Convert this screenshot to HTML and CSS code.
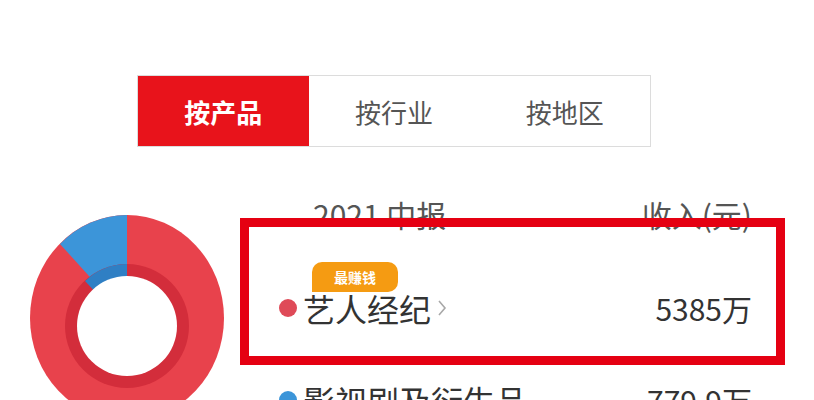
FILE: index.html
```html
<!DOCTYPE html>
<html>
<head>
  <meta charset="utf-8">
  <title>收入构成</title>
  <link rel="stylesheet" href="styles.css">
</head>
<body>
  <div class="tabs">
    <div class="tab active">按产品</div>
    <div class="tab">按行业</div>
    <div class="tab">按地区</div>
  </div>
  <div class="report">
    <svg class="donut" width="200" height="214" viewBox="0 0 200 214">
      <ellipse cx="97" cy="105" rx="97" ry="103" fill="#e8424c"/>
      <path d="M97,105 L97,2 A97,103 0 0 0 30,31 Z" fill="#3c95d9"/>
      <circle cx="97" cy="113" r="62" fill="#d32d3b"/>
      <path d="M97,113 L97,51 A62,62 0 0 0 55,68 Z" fill="#2f7fc4"/>
      <circle cx="97" cy="113" r="50" fill="#fff"/>
    </svg>
    <div class="table">
      <div class="head">
        <span>2021 中报</span>
        <span>收入(元)</span>
      </div>
      <div class="row first">
        <span class="badge">最赚钱</span>
        <div class="line">
          <i class="dot red"></i>
          <span class="name">艺人经纪</span>
          <svg class="chev" width="10" height="18" viewBox="0 0 10 18"><polyline points="2,2 8,9 2,16" fill="none" stroke="#a8a8a8" stroke-width="1.6"/></svg>
          <span class="val">5385万</span>
        </div>
      </div>
      <div class="row">
        <div class="line">
          <i class="dot blue"></i>
          <span class="name">影视剧及衍生品</span>
          <span class="val">779.9万</span>
        </div>
      </div>
    </div>
    <div class="highlight"></div>
  </div>
</body>
</html>
```

FILE: styles.css
```css
body {
  margin: 0;
  background: #fff;
  font-family: "Noto Sans CJK SC", "Noto Sans", sans-serif;
  color: #333;
  overflow: hidden;
}
.tabs {
  display: flex;
  width: 512px;
  height: 70px;
  margin: 75px 0 0 137px;
  border: 1px solid #dcdcdc;
}
.tab {
  flex: 1;
  display: flex;
  align-items: center;
  justify-content: center;
  font-size: 26px;
  color: #555;
}
.tab.active {
  background: #e8131b;
  color: #fff;
  font-weight: bold;
}
.report {
  position: relative;
  display: flex;
  margin-top: 43px;
  padding-left: 30px;
}
.donut {
  margin-top: 23px;
  flex: none;
}
.table {
  margin-left: 49px;
  width: 473px;
}
.head {
  display: flex;
  justify-content: space-between;
  height: 48px;
  line-height: 48px;
  font-size: 30px;
  color: #555;
  padding-left: 34px;
}
.row {
  display: flex;
  flex-direction: column;
}
.row.first {
  padding-top: 24px;
  box-sizing: border-box;
  height: 146px;
}
.badge {
  align-self: flex-start;
  margin-left: 33px;
  height: 30px;
  line-height: 30px;
  padding: 0 22px;
  background: #f59b12;
  border-radius: 10px 10px 10px 0;
  color: #fff;
  font-size: 14px;
  font-weight: bold;
}
.line {
  display: flex;
  align-items: center;
  height: 36px;
  margin-top: -2px;
}
.dot {
  width: 18px;
  height: 18px;
  border-radius: 50%;
  margin-right: 6px;
}
.dot.red { background: #df4a58; }
.dot.blue { background: #3c95d9; }
.name {
  font-size: 32px;
  color: #333;
}
.chev {
  margin-left: 6px;
}
.val {
  margin-left: auto;
  font-size: 30px;
  color: #333;
}
.highlight {
  position: absolute;
  left: 240px;
  top: 28px;
  width: 527px;
  height: 129px;
  border: 9px solid #e50012;
}
```
